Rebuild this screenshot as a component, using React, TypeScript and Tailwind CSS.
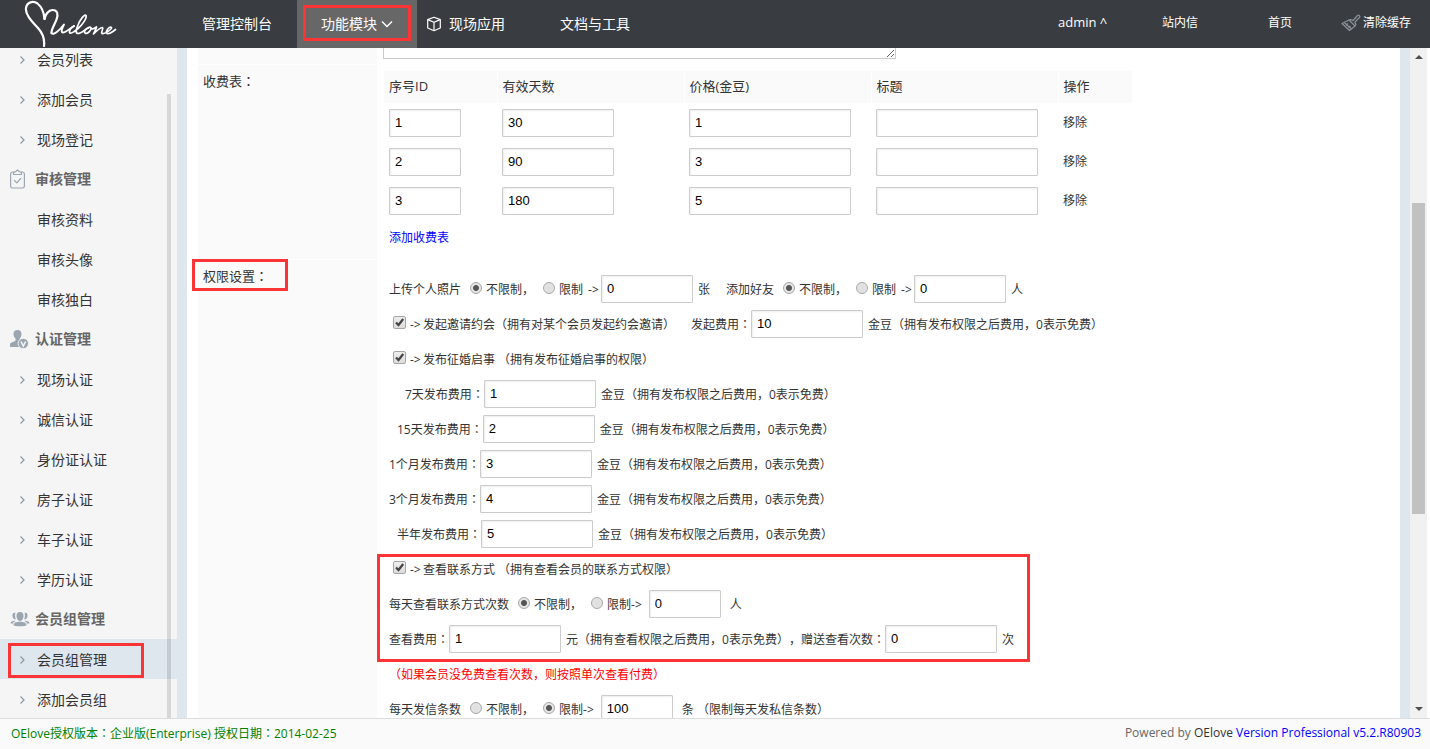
import type { ReactNode } from "react";

/** Chinese text whose colons sit in the middle of their box. */
function Zh({ children }: { children: string }) {
  return (
    <>
      {children.split(/(：)/).map((part, i) =>
        i % 2 === 1 ? (
          <span key={i} lang="zh-TW" className="font-['Noto_Sans_CJK_TC',sans-serif]">
            {part}
          </span>
        ) : (
          part
        ),
      )}
    </>
  );
}

function Highlight({ className }: { className: string }) {
  return <span aria-hidden="true" className={`pointer-events-none absolute border-3 border-[#fb3535] ${className}`} />;
}

/* ---------- icons ---------- */

function Logo() {
  return (
    <svg viewBox="0 0 100 48" className="h-12 w-[100px]" fill="none" stroke="#fff" strokeLinecap="round" strokeLinejoin="round" role="img" aria-label="OElove">
      <path strokeWidth="2.200" d="M24 46C25 38 22.500 33 18 28C12 21.500 5 14.500 6 8C7 2 13 .5 17.500 3.500C22 7 24 13 24.500 19" />
      <path strokeWidth="2.200" d="M24.500 19C25 15 28.500 10 32.500 10C37.500 10 38.500 14 36.500 19.500C35 24 31 30 31.500 33" />
      <path strokeWidth="1.900" d="M31.500 33C33 36 40 30 44 24.500C42.500 27.500 40.500 31.500 42.500 32.500C45 33 50 28.500 54 26" />
      <path strokeWidth="1.700" d="M54 26C51.500 27 49 30.500 49.500 32.500C50.500 34.500 54.500 31.500 58 28.500C62.500 24.500 67 18.500 66 15.500C64.500 13.500 60 20 58 25C56 29.500 55.500 33 57.500 33.500C60.500 34 65 29.500 69 27.500" />
      <path strokeWidth="1.700" d="M69 27.500C66 28 63.500 31.500 65 33C67 34.500 71.500 30.500 71 28C70.800 27 69.500 27 69 27.500M71 28.500C73 29.500 74.500 28.500 76.500 27C76 29.500 74.500 31.500 73.500 34C76.500 31 80.500 27 82.500 27.500C84 28.500 80.500 32 82 33.500C84 34.500 92 29.500 91.500 27.500C89.500 26 85.500 31 86.500 33C88 35 92.500 32 95.500 29.500" />
    </svg>
  );
}

function ChevronDown() {
  return (
    <svg viewBox="0 0 12 8" className="h-2 w-3" fill="none" stroke="#fff" strokeWidth="1.400" aria-hidden="true">
      <path d="M1 1.500 6 6.500 11 1.500" />
    </svg>
  );
}

function Cube() {
  return (
    <svg viewBox="0 0 16 16" className="size-4" fill="none" stroke="#fff" strokeWidth="1.200" strokeLinejoin="round" aria-hidden="true">
      <path d="M8 1.200 14.300 3.600V12L8 14.700 1.700 12V3.600Z" />
      <path d="M1.700 3.600 8 6.200 14.300 3.600M8 6.200V14.700" />
    </svg>
  );
}

function Brush() {
  return (
    <svg viewBox="0 0 20 18" className="h-[18px] w-5" fill="none" stroke="#8b919a" strokeWidth="1.200" strokeLinejoin="round" aria-hidden="true">
      <path d="M9.500 5.500 12 6.500 16.500 1.500C18 .5 19.500 2 18.500 3.500L13.800 8.200 15 10.500 14 12 8 6Z" />
      <path d="M8 6 1 9.500 8.500 16.500 14 12M3.200 8.500 10.500 15M5 11.500 7 9.500M7.500 13.800 9.500 12" />
    </svg>
  );
}

function ChevronRight() {
  return (
    <svg viewBox="0 0 5 8" className="h-2 w-[5px] shrink-0" fill="none" stroke="#8c969f" strokeWidth="1.200" aria-hidden="true">
      <path d="M.5.5 4 4 .5 7.500" />
    </svg>
  );
}

function Clipboard() {
  return (
    <svg viewBox="0 0 20 20" className="size-5" fill="none" stroke="#9ba6b1" strokeWidth="1.200" strokeLinejoin="round" strokeLinecap="round" aria-hidden="true">
      <path d="M4 3H2.500A2 2 0 0 0 .6 5V17A2 2 0 0 0 2.500 19H12.500A2 2 0 0 0 14.400 17V5A2 2 0 0 0 12.500 3H11" />
      <path d="M3.500 5.500V3.500L5.500 2.800 7.500 1 9.500 2.800 11.500 3.500V5.500Z" />
      <path d="M4.500 11.500 6.800 13.800 10.800 9.500" />
    </svg>
  );
}

function UserVerified() {
  return (
    <svg viewBox="0 0 20 20" className="size-5" fill="#9ba6b1" aria-hidden="true">
      <path d="M7.500 1C10 1 11.500 2.500 11.500 5C11.500 7.500 10.500 8.500 9.800 9.500V11.500L14 14V18H0V15.500C0 13.500 3 13 5.500 12V9.500C4.500 8.500 3.500 7.500 3.500 5C3.500 2.500 5 1 7.500 1Z" />
      <circle cx="13.300" cy="14.500" r="5.200" stroke="#f5f5f5" strokeWidth="1" />
      <path d="M11 12.500 13.300 17 15.600 12.500" fill="none" stroke="#f5f5f5" strokeWidth="1.600" />
    </svg>
  );
}

function UserGroup() {
  return (
    <svg viewBox="0 0 20 16" className="h-4 w-5" fill="#9ba6b1" aria-hidden="true">
      <path d="M10 1C12.500 1 13.500 2.500 13.500 5C13.500 7 12.500 8.500 12 9.300C11 10.300 9 10.300 8 9.300C7.500 8.500 6.500 7 6.500 5C6.500 2.500 7.500 1 10 1Z" />
      <path d="M10 10.800C13.500 10.800 16.500 12 16.500 13.500C16.500 15 13.500 15.300 10 15.300S3.500 15 3.500 13.500C3.500 12 6.500 10.800 10 10.800Z" />
      <path d="M5.500 1.800C3 1.300 2.300 3 2.500 5C2.700 7 3.800 8.500 5.800 8.500C5 6.500 4.800 3.500 5.500 1.800ZM14.500 1.800C17 1.300 17.700 3 17.500 5C17.300 7 16.200 8.500 14.200 8.500C15 6.500 15.200 3.500 14.500 1.800Z" />
      <path d="M4.500 9.800C2.500 10 .5 11 .5 12.300L2.700 12.800C3 11.500 4 10.800 5.500 10.200ZM15.500 9.800C17.500 10 19.500 11 19.500 12.300L17.300 12.800C17 11.500 16 10.800 14.500 10.200Z" />
    </svg>
  );
}

/* ---------- form controls ---------- */

const WIDTHS = { sm: "w-[72px]", md: "w-[92px]", lg: "w-[112px]", xl: "w-[162px]" };

function Field({ value, label, size = "lg", className = "mb-0.5" }: { value: string; label: string; size?: keyof typeof WIDTHS; className?: string }) {
  return (
    <input
      type="text"
      aria-label={label}
      defaultValue={value}
      className={`h-7 shrink-0 rounded-[1px] border border-[#ccc] bg-white px-[5px] font-['Liberation_Sans',sans-serif] text-[13px] text-black shadow-[inset_1px_1px_2px_#eee] outline-none ${WIDTHS[size]} ${className}`}
    />
  );
}

function Radio({ name, label, checked = false }: { name: string; label: string; checked?: boolean }) {
  return (
    <label className="ml-[9px] flex items-center gap-1">
      <input
        type="radio"
        name={name}
        defaultChecked={checked}
        className="mb-1 size-3 appearance-none rounded-full border border-[#a6a6a6] bg-[radial-gradient(circle,#dedede,#e6e6e6)] checked:bg-[radial-gradient(circle,#555_0_2.5px,#e6e6e6_3.5px)]"
      />
      <span>{label}</span>
    </label>
  );
}

function Check({ label }: { label: string }) {
  return (
    <label className="ml-1 flex items-center">
      <span className="relative mr-1 mb-1 size-[13px]">
        <input type="checkbox" defaultChecked className="peer block size-[13px] appearance-none rounded-xs border border-[#a6a6a6] bg-linear-to-b from-[#ededed] to-[#dcdcdc]" />
        <svg viewBox="0 0 13 13" className="pointer-events-none absolute inset-0 hidden size-[13px] peer-checked:block" fill="none" stroke="#444" strokeWidth="2.200" aria-hidden="true">
          <path d="M3 6.500 5.500 9 10.200 3" />
        </svg>
      </span>
      <Arrow />
      <span>{label}</span>
    </label>
  );
}

function Arrow() {
  return <span className="w-[13px] shrink-0">{"->"}</span>;
}

function Line({ children, className = "" }: { children: ReactNode; className?: string }) {
  return <div className={`flex h-[35px] items-center whitespace-nowrap ${className}`}>{children}</div>;
}

/* ---------- data ---------- */

const PRICES = [
  { id: "1", days: "30", price: "1" },
  { id: "2", days: "90", price: "3" },
  { id: "3", days: "180", price: "5" },
];

const PUBLISH_FEES = [
  { label: "7天发布费用：", value: "1", indent: "pl-4" },
  { label: "15天发布费用：", value: "2", indent: "pl-2" },
  { label: "1个月发布费用：", value: "3", indent: "" },
  { label: "3个月发布费用：", value: "4", indent: "" },
  { label: "半年发布费用：", value: "5", indent: "pl-2" },
];

type Group = { title?: string; icon?: ReactNode; items: string[]; plain?: boolean };

const GROUPS: Group[] = [
  { items: ["会员列表", "添加会员", "现场登记"] },
  { title: "审核管理", icon: <Clipboard />, items: ["审核资料", "审核头像", "审核独白"], plain: true },
  { title: "认证管理", icon: <UserVerified />, items: ["现场认证", "诚信认证", "身份证认证", "房子认证", "车子认证", "学历认证"] },
  { title: "会员组管理", icon: <UserGroup />, items: ["会员组管理", "添加会员组"] },
];

const ACTIVE_ITEM = "会员组管理";

/* ---------- page parts ---------- */

function Header() {
  return (
    <header className="flex h-12 shrink-0 items-center justify-between bg-[#393d42] text-white">
      <div className="flex h-full items-center">
        <a href="#home" className="ml-5 w-[157px]">
          <Logo />
        </a>
        <nav className="flex h-full items-center text-sm">
          <a href="#console" className="flex h-full w-[120px] items-center pl-[25px]">
            管理控制台
          </a>
          <a href="#modules" className="relative flex h-full w-[120px] items-center justify-center gap-1 bg-[#676767]">
            功能模块
            <ChevronDown />
            <Highlight className="inset-x-1.5 top-[5px] bottom-[7px]" />
          </a>
          <a href="#apps" className="flex h-full w-[120px] items-center gap-[7px] pl-[9px]">
            <Cube />
            现场应用
          </a>
          <a href="#docs" className="flex h-full w-[120px] items-center pl-[23px]">
            文档与工具
          </a>
        </nav>
      </div>
      <nav className="flex items-center pr-[19px] pb-0.5 text-xs">
        <a href="#admin" className="w-[104px] text-[13px]">
          admin ^
        </a>
        <a href="#mail" className="w-[106px]">
          站内信
        </a>
        <a href="#index" className="w-[73px]">
          首页
        </a>
        <a href="#cache" className="flex items-center gap-0.5">
          <Brush />
          清除缓存
        </a>
      </nav>
    </header>
  );
}

function Sidebar() {
  return (
    <aside className="relative w-[177px] shrink-0 overflow-hidden bg-[#f5f5f5] text-sm text-[#333]">
      <nav className="-mt-[9px]">
        {GROUPS.map((group, g) => (
          <section key={g}>
            {group.title && (
              <h2 className="flex h-10 items-center gap-[5px] pl-2.5 font-bold text-[#666]">
                {group.icon}
                {group.title}
              </h2>
            )}
            <ul>
              {group.items.map((item) => (
                <li key={item} className="relative">
                  <a href="#item" className={`flex h-10 items-center gap-3 pt-0.5 pl-5 ${item === ACTIVE_ITEM ? "bg-[#dee6ee]" : ""}`}>
                    {group.plain ? <span className="w-[5px]" /> : <ChevronRight />}
                    {item}
                  </a>
                  {item === ACTIVE_ITEM && <Highlight className="top-1 left-2 h-[35px] w-[136px]" />}
                </li>
              ))}
            </ul>
          </section>
        ))}
      </nav>
      <div className="absolute top-[46px] right-1.5 bottom-0 w-1 bg-black/12" />
    </aside>
  );
}

function Row({ label, children, marked = false, className = "" }: { label: string; children: ReactNode; marked?: boolean; className?: string }) {
  return (
    <div className={`flex border-b border-white ${className}`}>
      <div className="relative w-[179px] shrink-0 bg-[#fafafa] pt-1.5 pl-[5px] text-[13px] leading-5">
        <Zh>{label}</Zh>
        {marked && <Highlight className="-top-px -left-1.5 h-8 w-24" />}
      </div>
      <div className="min-w-0 flex-1 pl-[7px]">{children}</div>
    </div>
  );
}

function PriceTable() {
  const head = "h-8 border-r border-white bg-[#fafafa] pl-[5px] text-left text-[13px] font-normal";
  return (
    <div className="pt-1.5">
      <table className="w-[749px] table-fixed border-collapse">
        <thead>
          <tr>
            <th className={`w-[113px] ${head}`}>序号ID</th>
            <th className={`w-[187px] ${head}`}>有效天数</th>
            <th className={`w-[187px] ${head}`}>价格(金豆)</th>
            <th className={`w-[187px] ${head}`}>标题</th>
            <th className={head}>操作</th>
          </tr>
        </thead>
        <tbody>
          {PRICES.map((row) => (
            <tr key={row.id} className="h-[39px]">
              <td className="pl-[5px]">
                <Field size="sm" label="序号ID" value={row.id} className="block" />
              </td>
              <td className="pl-[5px]">
                <Field label="有效天数" value={row.days} className="block" />
              </td>
              <td className="pl-[5px]">
                <Field size="xl" label="价格" value={row.price} className="block" />
              </td>
              <td className="pl-[5px]">
                <Field size="xl" label="标题" value="" className="block" />
              </td>
              <td className="pl-[5px]">
                <button type="button">移除</button>
              </td>
            </tr>
          ))}
        </tbody>
      </table>
      <div className="pt-2 pb-[11px] pl-[5px]">
        <a href="#add" className="leading-5 text-[#00f]">
          添加收费表
        </a>
      </div>
    </div>
  );
}

function Permissions() {
  return (
    <div className="pt-3 pl-[5px]">
      <Line>
        上传个人照片
        <Radio name="photo" label="不限制，" checked />
        <Radio name="photo" label="限制" />
        <span className="ml-[5px] flex items-center">
          <Arrow />
          <Field size="md" label="照片数量" value="0" />
        </span>
        <span className="ml-[5px]">张</span>
        <span className="ml-4">添加好友</span>
        <Radio name="friend" label="不限制，" checked />
        <Radio name="friend" label="限制" />
        <span className="ml-[5px] flex items-center">
          <Arrow />
          <Field size="md" label="好友数量" value="0" />
        </span>
        <span className="ml-[5px]">人</span>
      </Line>
      <Line>
        <Check label="发起邀请约会（拥有对某个会员发起约会邀请）" />
        <span className="ml-4">
          <Zh>发起费用：</Zh>
        </span>
        <Field label="发起费用" value="10" />
        <span className="ml-[5px]">金豆（拥有发布权限之后费用，0表示免费）</span>
      </Line>
      <Line>
        <Check label="发布征婚启事 （拥有发布征婚启事的权限）" />
      </Line>
      {PUBLISH_FEES.map((fee) => (
        <Line key={fee.label} className={fee.indent}>
          <span>
            <Zh>{fee.label}</Zh>
          </span>
          <Field label={fee.label} value={fee.value} />
          <span className="ml-[5px]">金豆（拥有发布权限之后费用，0表示免费）</span>
        </Line>
      ))}
      <div className="relative">
        <Highlight className="top-0.5 -bottom-[5px] -left-3 w-[653px]" />
        <Line>
          <Check label="查看联系方式 （拥有查看会员的联系方式权限）" />
        </Line>
        <Line>
          每天查看联系方式次数
          <Radio name="contact" label="不限制，" checked />
          <Radio name="contact" label="限制->" />
          <Field size="sm" label="查看次数" value="0" className="mb-0.5 ml-[7px]" />
          <span className="ml-[9px]">人</span>
        </Line>
        <Line>
          <span>
            <Zh>查看费用：</Zh>
          </span>
          <Field label="查看费用" value="1" />
          <span className="ml-[5px]">
            <Zh>元（拥有查看权限之后费用，0表示免费），赠送查看次数：</Zh>
          </span>
          <Field label="赠送查看次数" value="0" />
          <span className="ml-[5px]">次</span>
        </Line>
      </div>
      <Line className="text-[#f00]">（如果会员没免费查看次数，则按照单次查看付费）</Line>
      <Line>
        每天发信条数
        <Radio name="letters" label="不限制，" />
        <Radio name="letters" label="限制->" checked />
        <Field size="sm" label="发信条数" value="100" className="mb-0.5 ml-[7px]" />
        <span className="ml-[9px]">条 （限制每天发私信条数）</span>
      </Line>
    </div>
  );
}

function ScrollBar() {
  return (
    <div aria-hidden="true" className="mr-[3px] flex w-[17px] shrink-0 flex-col items-center bg-[#f1f1f1] py-[7px]">
      <div className="size-0 border-x-4 border-b-4 border-x-transparent border-b-[#505050]" />
      <div className="mt-36 h-[311px] w-[13px] bg-[#c1c1c1]" />
      <div className="mt-auto size-0 border-x-4 border-t-4 border-x-transparent border-t-[#505050]" />
    </div>
  );
}

export default function App() {
  return (
    <div className="flex h-screen flex-col overflow-hidden bg-white font-['Open_Sans','Noto_Sans_CJK_SC',sans-serif] text-xs text-[#333] [text-spacing-trim:space-all]">
      <Header />
      <div className="flex min-h-0 flex-1">
        <Sidebar />
        <main className="min-w-0 flex-1 overflow-hidden border-x-10 border-[#dee6ee] pl-[11px]">
          <Row label="" className="-mt-10">
            <textarea aria-label="备注" className="-ml-px mb-[5px] block h-[51px] w-[513px] resize border border-[#ccc] bg-white outline-none" />
          </Row>
          <Row label="收费表：">
            <PriceTable />
          </Row>
          <Row label="权限设置：" marked>
            <Permissions />
          </Row>
        </main>
        <ScrollBar />
      </div>
      <footer className="flex h-[31px] shrink-0 items-center justify-between border-t border-[#ddd] bg-[#fafafa] pr-[9px] pb-0.5 pl-[11px]">
        <p className="text-[green]">
          <Zh>OElove授权版本：企业版(Enterprise) 授权日期：2014-02-25</Zh>
        </p>
        <p className="text-[#666]">
          Powered by <span className="text-[#333]">OElove</span>{" "}
          <a href="#version" className="text-[#00f]">
            Version Professional v5.2.R80903
          </a>
        </p>
      </footer>
    </div>
  );
}
